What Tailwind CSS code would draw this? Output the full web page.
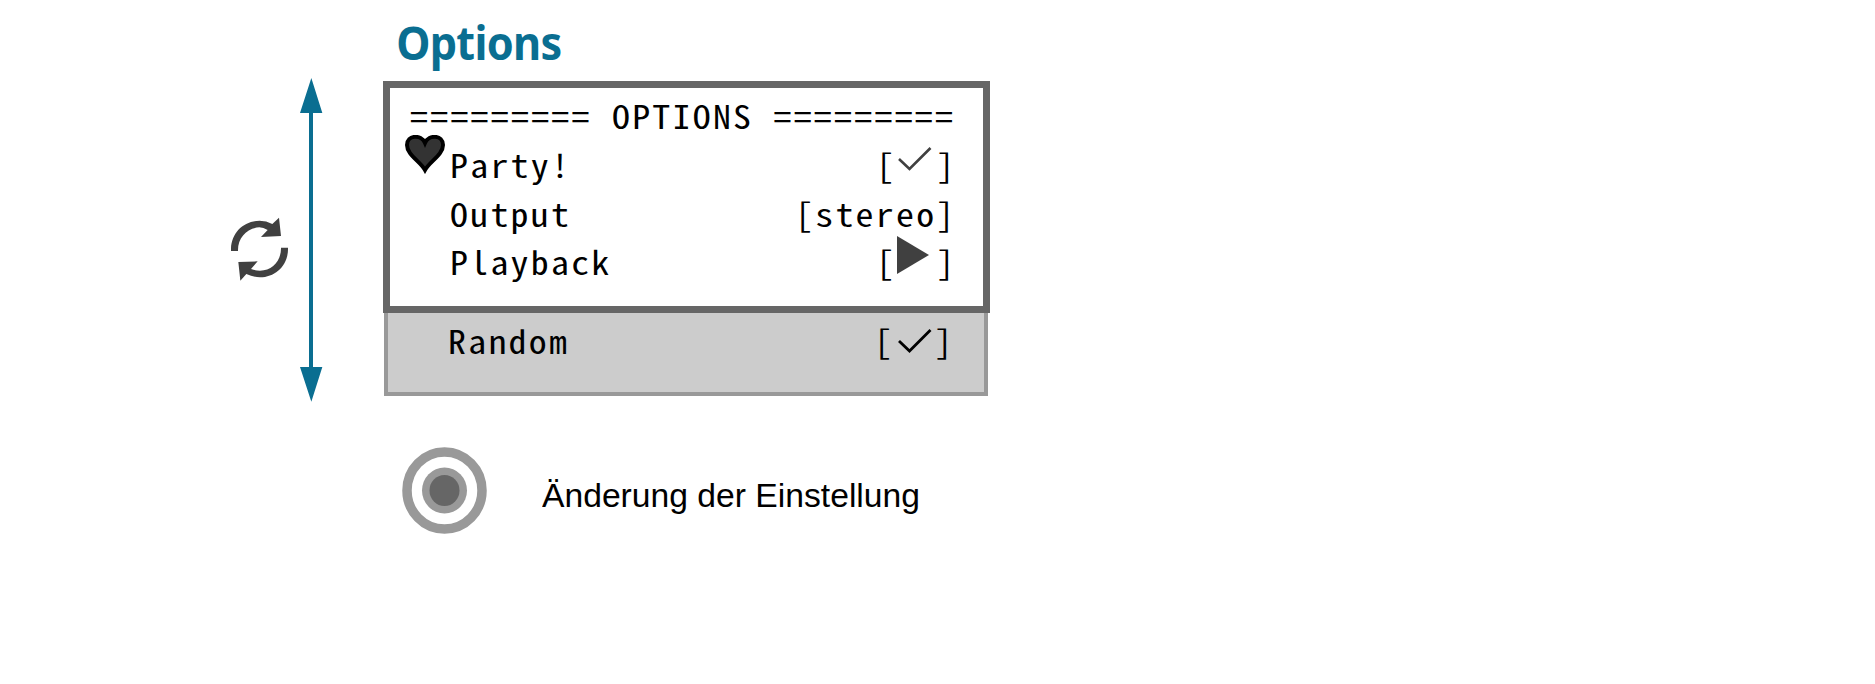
<!DOCTYPE html>
<html lang="de">
<head>
<meta charset="utf-8">
<title>Options</title>
<script src="https://cdn.jsdelivr.net/npm/@tailwindcss/browser@4"></script>
</head>
<body class="bg-white text-black overflow-hidden">
<main class="flex h-[684px] w-[1875px] pl-[231px]">
  <!-- scroll range -->
  <aside class="flex w-[152px] shrink-0 pt-[78px]">
    <svg class="mt-[139px] h-[64px] w-[58px] shrink-0" viewBox="33 471 174 192" fill="#404040">
      <path d="M33 573C31 521 69 482 119 482Q139 482 157 492L177 473L183 528L123 531L143 510Q130 502 118 502C81 504 53 533 54 573Z"/>
      <path d="M204 563C206 614 168 652 120 652Q98 651 79 642L61 662L55 606L113 604L93 627Q106 632 120 632C157 632 184 602 183 563Z"/>
    </svg>
    <svg class="ml-[11px] h-[324px] w-[23px] shrink-0" viewBox="240 54 69 972" fill="#0a6e91">
      <path d="M274 54L307 159H279V921H307L274 1025L240 921H267V159H240Z"/>
    </svg>
  </aside>
  <section class="w-[607px] shrink-0">
    <h1 class="h-[81px] origin-left scale-x-[0.94] pl-[14px] pt-[10px] font-['Noto_Sans'] text-[46px] font-bold leading-[64px] tracking-[-0.7px] text-[#0a6e91] whitespace-nowrap">Options</h1>
    <div class="flex h-[232px] flex-col border-[7px] border-[#666666] pl-[20px] pr-[26px] pt-[3px] font-['Noto_Sans_Mono_CJK_SC','DejaVu_Sans_Mono',monospace] text-[32px] leading-[48.8px] tracking-[2.03px]">
      <div class="h-[48.8px] w-[547px] origin-left scale-x-[1.12] whitespace-pre">========= OPTIONS =========</div>
      <div class="relative flex h-[48.8px] justify-between pl-[40px]">
        <svg class="absolute left-[-5px] top-[-5px] h-[39px] w-[40px]" viewBox="0 0 40 39"><path d="M20 35C15 26 2 20 2 10C2 0 16 -1 20 8C24 -1 38 0 38 10C38 20 25 26 20 35Z" fill="#333" stroke="#000" stroke-width="4"/></svg>
        <span class="origin-left scale-x-[1.12]">Party!</span>
        <span class="relative w-[81px]"><span class="block origin-left scale-x-[1.12] whitespace-pre">[  ]</span><svg class="absolute left-[22px] top-[6px] h-[26px] w-[34px]" viewBox="0 0 34 26" fill="none" stroke="#404040" stroke-width="2.6"><path d="M1 13L11.500 23L32.500 2"/></svg></span>
      </div>
      <div class="flex h-[48.8px] justify-between pl-[40px]"><span class="origin-left scale-x-[1.12]">Output</span><span class="w-[162px]"><span class="block w-[144px] origin-left scale-x-[1.12]">[stereo]</span></span></div>
      <div class="flex h-[48.8px] justify-between pl-[40px]"><span class="origin-left scale-x-[1.12]">Playback</span><span class="relative w-[81px]"><span class="block origin-left scale-x-[1.12] whitespace-pre">[  ]</span><svg class="absolute left-[21px] top-[-1px] h-[38px] w-[32px]" viewBox="0 0 32 38"><path d="M0 0L32 19L0 38Z" fill="#404040"/></svg></span></div>
    </div>
    <div class="ml-px flex h-[83px] w-[604px] justify-between border-4 border-t-0 border-[#999999] bg-[#cccccc] pl-[60px] pr-[29px] pt-[3px] font-['Noto_Sans_Mono_CJK_SC','DejaVu_Sans_Mono',monospace] text-[32px] leading-[48.8px] tracking-[2.03px]">
      <span class="origin-left scale-x-[1.12]">Random</span>
      <span class="relative h-[49px] w-[81px]"><span class="block origin-left scale-x-[1.12] whitespace-pre">[  ]</span><svg class="absolute left-[24px] top-[12px] h-[26px] w-[34px]" viewBox="0 0 34 26" fill="none" stroke="#000" stroke-width="2.8"><path d="M1 13L11.500 23L32.500 2"/></svg></span>
    </div>
    <div class="mt-[51px] flex pl-[19px]">
      <svg class="h-[87px] w-[85px] shrink-0" viewBox="0 0 85 87">
        <ellipse cx="42.500" cy="43.500" rx="37.500" ry="38.500" fill="#fff" stroke="#999" stroke-width="9.500"/>
        <ellipse cx="42.500" cy="43.500" rx="22.500" ry="23" fill="#999"/>
        <ellipse cx="42.500" cy="43.500" rx="15" ry="15.500" fill="#666"/>
      </svg>
      <p class="ml-[55px] mt-[28px] origin-left scale-x-[0.99] font-['Liberation_Sans'] text-[34px] leading-[40px] whitespace-nowrap">Änderung der Einstellung</p>
    </div>
  </section>
</main>
</body>
</html>
